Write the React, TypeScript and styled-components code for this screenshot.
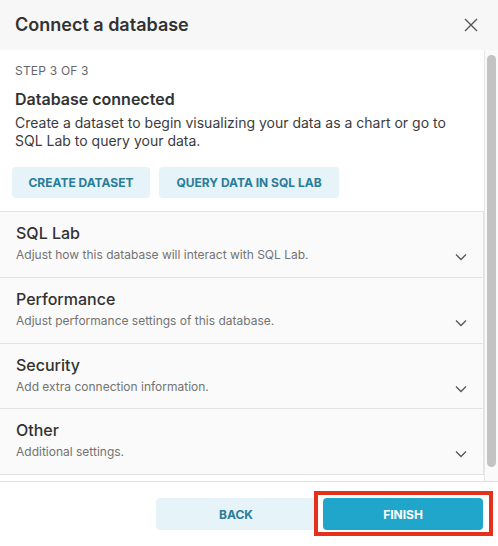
import React from "react";
import styled, { createGlobalStyle } from "styled-components";

const GlobalStyle = createGlobalStyle`
  html, body {
    margin: 0;
    padding: 0;
    background: #ffffff;
    font-family: Inter, "Noto Sans", sans-serif;
    color: #323232;
  }
  * {
    box-sizing: border-box;
  }
`;

const panels = [
  { title: "SQL Lab", description: "Adjust how this database will interact with SQL Lab." },
  { title: "Performance", description: "Adjust performance settings of this database." },
  { title: "Security", description: "Add extra connection information." },
  { title: "Other", description: "Additional settings." },
];

export default function App() {
  return (
    <>
      <GlobalStyle />
      <Modal>
        <Header>
          <Title>Connect a database</Title>
          <CloseButton aria-label="Close">
            <svg width="14" height="14" viewBox="0 0 14 14">
              <path d="M1 1 L13 13 M13 1 L1 13" stroke="#555" strokeWidth="1.4" fill="none" />
            </svg>
          </CloseButton>
        </Header>
        <Body>
          <ScrollContent>
            <Intro>
              <StepLabel>STEP 3 OF 3</StepLabel>
              <Heading>Database connected</Heading>
              <Description>
                Create a dataset to begin visualizing your data as a chart or go to SQL Lab to
                query your data.
              </Description>
              <ButtonRow>
                <SoftButton>CREATE DATASET</SoftButton>
                <SoftButton $wide>QUERY DATA IN SQL LAB</SoftButton>
              </ButtonRow>
            </Intro>
            <Panels>
              {panels.map((p) => (
                <Panel key={p.title}>
                  <PanelText>
                    <PanelTitle>{p.title}</PanelTitle>
                    <PanelDescription>{p.description}</PanelDescription>
                  </PanelText>
                  <Chevron width="12" height="8" viewBox="0 0 12 8">
                    <path d="M1 1.5 L6 6.5 L11 1.5" stroke="#555" strokeWidth="1.3" fill="none" />
                  </Chevron>
                </Panel>
              ))}
            </Panels>
          </ScrollContent>
          <ScrollTrack>
            <ScrollThumb />
          </ScrollTrack>
        </Body>
        <Footer>
          <FooterButton>BACK</FooterButton>
          <FooterButton $primary $highlighted>
            FINISH
          </FooterButton>
        </Footer>
      </Modal>
    </>
  );
}

const Modal = styled.div`
  width: 498px;
  height: 546px;
  display: flex;
  flex-direction: column;
  background: #ffffff;
`;

const Header = styled.div`
  height: 50px;
  flex: none;
  display: flex;
  align-items: center;
  justify-content: space-between;
  padding: 0 20px 0 15px;
  background: #f7f7f7;
`;

const Title = styled.h4`
  margin: 0;
  font-size: 18px;
  line-height: 24px;
  font-weight: 600;
  color: #323232;
`;

const CloseButton = styled.button`
  width: 14px;
  height: 14px;
  padding: 0;
  border: none;
  background: none;
  display: flex;
  cursor: pointer;
`;

const Body = styled.div`
  height: 431px;
  flex: none;
  display: flex;
  overflow: hidden;
`;

const ScrollContent = styled.div`
  flex: 1;
  min-width: 0;
`;

const ScrollTrack = styled.div`
  width: 14px;
  flex: none;
  display: flex;
  padding: 5px 2px 14px 2px;
  background: #fafafa;
  border-left: 1px solid #e6e6e6;
`;

const ScrollThumb = styled.div`
  flex: 1;
  background: #c3c3c3;
  border-radius: 5px;
`;

const Intro = styled.div`
  padding: 12px 15px 13px;
  display: flex;
  flex-direction: column;
`;

const StepLabel = styled.div`
  font-size: 12px;
  line-height: 18px;
  color: #666666;
  letter-spacing: 0.2px;
`;

const Heading = styled.h4`
  margin: 7px 0 3px;
  font-size: 16px;
  line-height: 24px;
  font-weight: 600;
  color: #323232;
`;

const Description = styled.p`
  margin: 0;
  font-size: 14px;
  line-height: 18px;
  color: #3c3c3c;
`;

const ButtonRow = styled.div`
  display: flex;
  gap: 9px;
  margin: 17px 0 0 -3px;
`;

const SoftButton = styled.button<{ $wide?: boolean }>`
  height: 31px;
  width: ${(p) => (p.$wide ? "180px" : "138px")};
  border: none;
  border-radius: 4px;
  background: #e6f3f8;
  color: #2a7d98;
  font-family: Inter, sans-serif;
  font-size: 12px;
  font-weight: 700;
  cursor: pointer;
`;

const Panels = styled.div`
  border-top: 1px solid #e3e3e3;
`;

const Panel = styled.div`
  display: flex;
  justify-content: space-between;
  padding: 9px 16px 12.75px 16px;
  background: #fafafa;
  border-right: 1px solid #e3e3e3;
  border-bottom: 1px solid #e3e3e3;
`;

const PanelText = styled.div`
  display: flex;
  flex-direction: column;
  gap: 1px;
`;

const PanelTitle = styled.div`
  font-size: 16px;
  line-height: 24px;
  font-weight: 500;
  color: #323232;
`;

const PanelDescription = styled.div`
  font-size: 12px;
  line-height: 18px;
  color: #737373;
`;

const Chevron = styled.svg`
  align-self: flex-end;
  margin-bottom: 3px;
`;

const Footer = styled.div`
  flex: 1;
  border-top: 1px solid #e0e0e0;
  display: flex;
  justify-content: flex-end;
  align-items: flex-start;
  gap: 7px;
  padding: 16px 15px;
`;

const FooterButton = styled.button<{ $primary?: boolean; $highlighted?: boolean }>`
  position: relative;
  width: 160px;
  height: 32px;
  border: none;
  border-radius: 4px;
  background: ${(p) => (p.$primary ? "#20a6ca" : "#e6f3f8")};
  color: ${(p) => (p.$primary ? "#ffffff" : "#2a7d98")};
  font-family: Inter, sans-serif;
  font-size: 12px;
  font-weight: 700;
  cursor: pointer;

  &::after {
    content: "";
    display: ${(p) => (p.$highlighted ? "block" : "none")};
    position: absolute;
    top: -7px;
    bottom: -6px;
    left: -9px;
    right: -10px;
    border: 4px solid #e5301c;
    pointer-events: none;
  }
`;
